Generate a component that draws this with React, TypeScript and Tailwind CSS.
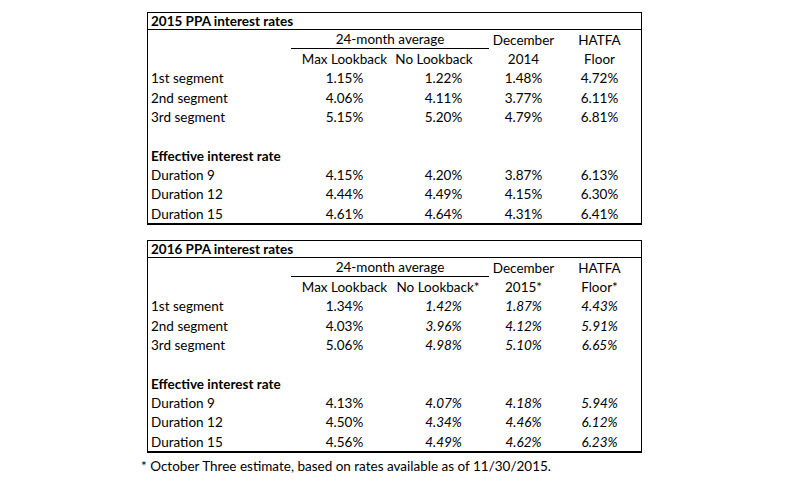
type Row = { label: string; bold?: boolean; values?: string[] };

type TableSpec = {
  title: string;
  noLookback: string;
  noLookbackPad: string;
  december: string;
  floor: string;
  italic: boolean;
  rows: Row[];
};

const tables: TableSpec[] = [
  {
    title: '2015 PPA interest rates',
    noLookback: 'No Lookback',
    noLookbackPad: 'pr-[19px]',
    december: '2014',
    floor: 'Floor',
    italic: false,
    rows: [
      { label: '1st segment', values: ['1.15%', '1.22%', '1.48%', '4.72%'] },
      { label: '2nd segment', values: ['4.06%', '4.11%', '3.77%', '6.11%'] },
      { label: '3rd segment', values: ['5.15%', '5.20%', '4.79%', '6.81%'] },
      { label: '' },
      { label: 'Effective interest rate', bold: true },
      { label: 'Duration 9', values: ['4.15%', '4.20%', '3.87%', '6.13%'] },
      { label: 'Duration 12', values: ['4.44%', '4.49%', '4.15%', '6.30%'] },
      { label: 'Duration 15', values: ['4.61%', '4.64%', '4.31%', '6.41%'] },
    ],
  },
  {
    title: '2016 PPA interest rates',
    noLookback: 'No Lookback*',
    noLookbackPad: 'pr-[11px]',
    december: '2015*',
    floor: 'Floor*',
    italic: true,
    rows: [
      { label: '1st segment', values: ['1.34%', '1.42%', '1.87%', '4.43%'] },
      { label: '2nd segment', values: ['4.03%', '3.96%', '4.12%', '5.91%'] },
      { label: '3rd segment', values: ['5.06%', '4.98%', '5.10%', '6.65%'] },
      { label: '' },
      { label: 'Effective interest rate', bold: true },
      { label: 'Duration 9', values: ['4.13%', '4.07%', '4.18%', '5.94%'] },
      { label: 'Duration 12', values: ['4.50%', '4.34%', '4.46%', '6.12%'] },
      { label: 'Duration 15', values: ['4.56%', '4.49%', '4.62%', '6.23%'] },
    ],
  },
];

const cell = 'h-[19.3px] pt-[2px] flex items-center justify-center whitespace-nowrap';

function RateTable({ spec }: { spec: TableSpec }) {
  return (
    <div className="w-[495px] border border-black border-b-2">
      <div className="h-[17px] pt-[2px] flex items-center pl-[3px] font-bold whitespace-nowrap border-b border-black">
        {spec.title}
      </div>
      <div className="grid grid-cols-[143px_107px_91px_69px_83px]">
        <div className={cell} />
        <div className={`${cell} col-span-2 border-b border-black`}>24-month average</div>
        <div className={cell}>December</div>
        <div className={cell}>HATFA</div>

        <div className={cell} />
        <div className={cell}>Max Lookback</div>
        <div className={`${cell} ${spec.noLookbackPad}`}>{spec.noLookback}</div>
        <div className={cell}>{spec.december}</div>
        <div className={cell}>{spec.floor}</div>

        {spec.rows.map((row, i) => (
          <div key={i} className="contents">
            <div className={`h-[19.3px] pt-[2px] flex items-center pl-[3px] whitespace-nowrap ${row.bold ? 'font-bold' : ''}`}>
              {row.label}
            </div>
            {[0, 1, 2, 3].map((j) => (
              <div key={j} className={`${cell} ${spec.italic && j > 0 ? 'italic' : ''}`}>
                {row.values ? row.values[j] : ''}
              </div>
            ))}
          </div>
        ))}
      </div>
    </div>
  );
}

export default function App() {
  return (
    <div className="w-[785px] h-[490px] bg-white text-black text-[13.5px] leading-none font-['Lato',sans-serif]">
      <div className="pl-[147px] pt-[12px] flex flex-col">
        <RateTable spec={tables[0]} />
        <div className="h-[15px]" />
        <RateTable spec={tables[1]} />
        <div className="-ml-[6px] mt-[7px] whitespace-nowrap">
          * October Three estimate, based on rates available as of 11/30/2015.
        </div>
      </div>
    </div>
  );
}
